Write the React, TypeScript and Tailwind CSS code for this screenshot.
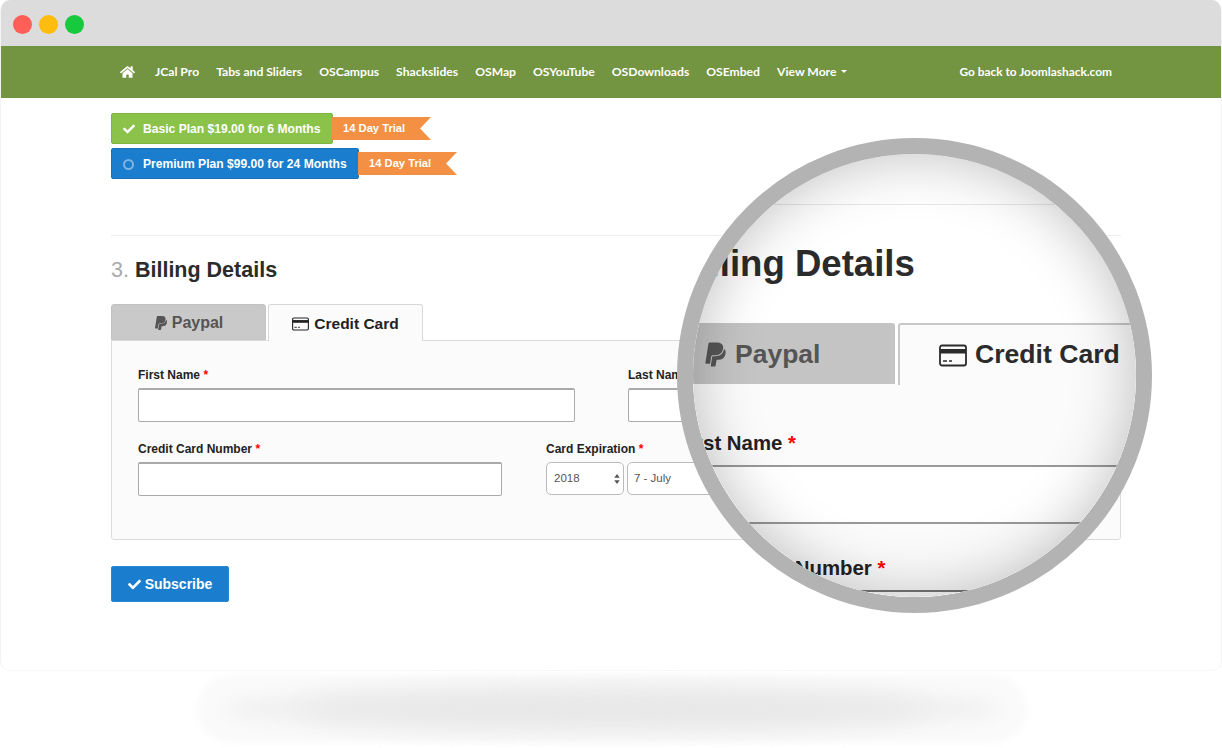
import React from 'react';
import { FaCheck, FaHome, FaPaypal } from 'react-icons/fa';

const navItems = ['JCal Pro', 'Tabs and Sliders', 'OSCampus', 'Shackslides', 'OSMap', 'OSYouTube', 'OSDownloads', 'OSEmbed'];

const CardIcon: React.FC<{ className?: string }> = ({ className }) => (
  <svg viewBox="0 0 28 22" className={className} fill="none">
    <rect x="1" y="1" width="26" height="20" rx="2" stroke="currentColor" strokeWidth="1.8" />
    <rect x="1" y="4.5" width="26" height="4.5" fill="currentColor" />
    <path d="M4 16.5h4M10 16.5h3" stroke="currentColor" strokeWidth="1.5" />
  </svg>
);

const Ribbon: React.FC = () => (
  <div className="-ml-px w-[99px] h-[23px] pl-[11px] flex items-center bg-[#f39043] text-white text-[11.2px] font-bold [clip-path:polygon(0_0,100%_0,89%_50%,100%_100%,0_100%)]">
    14 Day Trial
  </div>
);

const Label: React.FC<{ text: string }> = ({ text }) => (
  <div className="text-[12px] leading-[14px] font-bold text-[#222] mb-[6px]">
    {text} <span className="text-[#f00]">*</span>
  </div>
);

const Magnifier: React.FC = () => (
  <div className="absolute left-[677px] top-[138px] w-[475px] h-[475px] rounded-full border-[16px] border-[#b3b3b3] bg-white overflow-hidden">
    <div className="absolute left-0 top-[50px] w-full h-px bg-[#e8e8e8]" />
    <div className="absolute left-[-20px] top-[89px] text-[36.6px] leading-[42px] font-bold text-[#2b2b2b] whitespace-nowrap">Billing Details</div>
    <div className="absolute left-[-20px] top-[230px] w-[520px] h-[260px] bg-[#fbfbfb]" />
    <div className="absolute left-[-20px] top-[169px] w-[222px] h-[61px] bg-[#c4c4c4] rounded-tr-[3px] flex items-center text-[#555] text-[26.5px] font-bold pt-[2px]">
      <FaPaypal className="ml-[30px] w-[25px] h-[27px]" />
      <span className="ml-[7px]">Paypal</span>
    </div>
    <div className="absolute left-[205px] top-[169px] w-[300px] h-[62px] bg-[#fbfbfb] border-t-2 border-l-2 border-[#c8c8c8] rounded-tl-[3px] flex items-center text-[#2b2b2b] text-[26.6px] font-bold">
      <CardIcon className="ml-[39px] w-[28px] h-[23px]" />
      <span className="ml-[8px]">Credit Card</span>
    </div>
    <div className="absolute left-[-16px] top-[275px] text-[20.4px] leading-[28px] font-bold text-[#222] whitespace-nowrap">
      First Name <span className="text-[#f00]">*</span>
    </div>
    <div className="absolute left-[-15px] top-[311px] w-[520px] h-[59px] bg-white border-y-2 border-[#999]" />
    <div className="absolute left-[-15px] top-[400px] text-[20.4px] leading-[28px] font-bold text-[#222] whitespace-nowrap">
      Credit Card Number <span className="text-[#f00]">*</span>
    </div>
    <div className="absolute left-[-15px] top-[436px] w-[520px] h-[60px] bg-white border-t-2 border-[#777]" />
    <div className="absolute inset-0 rounded-full shadow-[inset_0_0_60px_rgba(0,0,0,0.25)]" />
  </div>
);

export default function App() {
  return (
    <div className="relative w-[1222px] h-[748px] bg-white overflow-hidden font-['Liberation_Sans',Arial,sans-serif]">
      <div className="h-[671px] rounded-[10px] border-x border-b border-x-[#f3f3f3] border-b-[#f8f8f8] overflow-hidden flex flex-col">
        <div className="h-[46px] -mx-px bg-[#dcdcdc] flex items-center gap-[7px] pl-[13px] pt-[2px] shrink-0">
          <span className="w-[19px] h-[19px] rounded-full bg-[#ff5f57]" />
          <span className="w-[19px] h-[19px] rounded-full bg-[#febc0f]" />
          <span className="w-[19px] h-[19px] rounded-full bg-[#17c93c]" />
        </div>

        <nav className="h-[52px] -mx-px bg-[#739440] shrink-0 flex items-center pl-[120px] pr-[110px] text-white text-[12.15px] font-bold font-['Lato',sans-serif]">
          <FaHome className="w-[15px] h-[14px] mr-[20px]" />
          <div className="flex items-center gap-[17px]">
            {navItems.map((item) => (
              <span key={item}>{item}</span>
            ))}
            <span className="flex items-center">
              View More
              <span className="ml-[5px] border-x-[3.5px] border-t-[3.5px] border-x-transparent border-t-white" />
            </span>
          </div>
          <span className="ml-auto text-[11.9px]">Go back to Joomlashack.com</span>
        </nav>

        <main className="pl-[110px] pr-[100px] pt-[15px] flex-1">
          <div className="flex flex-col gap-[4px]">
            <div className="flex items-center">
              <div className="w-[222px] h-[31px] pt-px bg-[#8bc24a] border border-[#7fb53f] rounded-[2px] flex items-center pl-[11px] text-white text-[12.1px] font-bold">
                <FaCheck className="w-[12px] h-[12px] mr-[8px]" />
                Basic Plan $19.00 for 6 Months
              </div>
              <Ribbon />
            </div>
            <div className="flex items-center">
              <div className="w-[248px] h-[31px] pt-px bg-[#1b7dcd] border border-[#1a72ba] rounded-[2px] flex items-center pl-[11px] text-white text-[12.1px] font-bold">
                <span className="w-[11px] h-[11px] rounded-full border-2 border-[#7fb3e2] mr-[9px]" />
                Premium Plan $99.00 for 24 Months
              </div>
              <Ribbon />
            </div>
          </div>

          <div className="mt-[56px] h-px bg-[#eeeeee]" />

          <h2 className="mt-[21px] text-[21.5px] leading-[26px] font-bold text-[#2b2b2b]">
            <span className="font-normal text-[#aaa] mr-[6px]">3.</span>Billing Details
          </h2>

          <div className="mt-[21px] flex gap-[2px] relative z-10 h-[36px]">
            <div className="w-[155px] h-[36px] pt-[2px] bg-[#c9c9c9] border border-[#c2c2c2] rounded-t-[3px] flex items-center justify-center gap-[4px] text-[16px] font-bold text-[#555]">
              <FaPaypal className="w-[14px] h-[16px]" />
              Paypal
            </div>
            <div className="w-[155px] h-[37px] pt-px bg-[#fbfbfb] border border-b-0 border-[#d8d8d8] rounded-t-[3px] flex items-center justify-center gap-[5px] text-[15.5px] font-bold text-[#222]">
              <CardIcon className="w-[17px] h-[14px]" />
              Credit Card
            </div>
          </div>

          <div className="h-[200px] bg-[#fbfbfb] border border-[#dcdcdc] rounded-b-[3px] pl-[26px] pt-[27px]">
            <div className="flex gap-[53px]">
              <div className="w-[437px]">
                <Label text="First Name" />
                <input className="block w-full h-[34px] bg-white border border-t-2 border-[#aaa] rounded-[2px]" />
              </div>
              <div className="w-[466px]">
                <Label text="Last Name" />
                <input className="block w-full h-[34px] bg-white border border-t-2 border-[#aaa] rounded-[2px]" />
              </div>
            </div>
            <div className="flex gap-[44px] mt-[20px]">
              <div className="w-[364px]">
                <Label text="Credit Card Number" />
                <input className="block w-full h-[34px] bg-white border border-t-2 border-[#aaa] rounded-[2px]" />
              </div>
              <div className="w-[300px]">
                <Label text="Card Expiration" />
                <div className="flex gap-[3px] text-[11.5px] text-[#555]">
                  <div className="w-[78px] h-[33px] bg-white border border-[#bbb] rounded-[5px] flex items-center justify-between pl-[7px] pr-[3px]">
                    2018
                    <svg viewBox="0 0 6 11" className="w-[6px] h-[10px]" fill="#555">
                      <path d="M3 0l3 4H0zM3 11L0 7h6z" />
                    </svg>
                  </div>
                  <div className="w-[180px] h-[33px] bg-white border border-[#bbb] rounded-[5px] flex items-center pl-[6px]">7 - July</div>
                </div>
              </div>
            </div>
          </div>

          <button className="mt-[26px] w-[118px] h-[36px] bg-[#1b7dcd] border border-[#2a87d3] rounded-[2px] flex items-center justify-center gap-[4px] text-white text-[14px] font-bold">
            <FaCheck className="w-[13px] h-[13px]" />
            Subscribe
          </button>
        </main>
      </div>

      <div className="absolute left-[197px] top-[675px] w-[830px] h-[68px] rounded-[36px] bg-[#fafafa] blur-[3px]" />
      <div className="absolute left-[225px] top-[685px] w-[774px] h-[48px] rounded-[50%] bg-[#f0f0f0] blur-[8px]" />
      <div className="absolute left-[300px] top-[695px] w-[624px] h-[28px] rounded-[50%] bg-[#e6e6e6] blur-[12px]" />
      <Magnifier />
    </div>
  );
}
